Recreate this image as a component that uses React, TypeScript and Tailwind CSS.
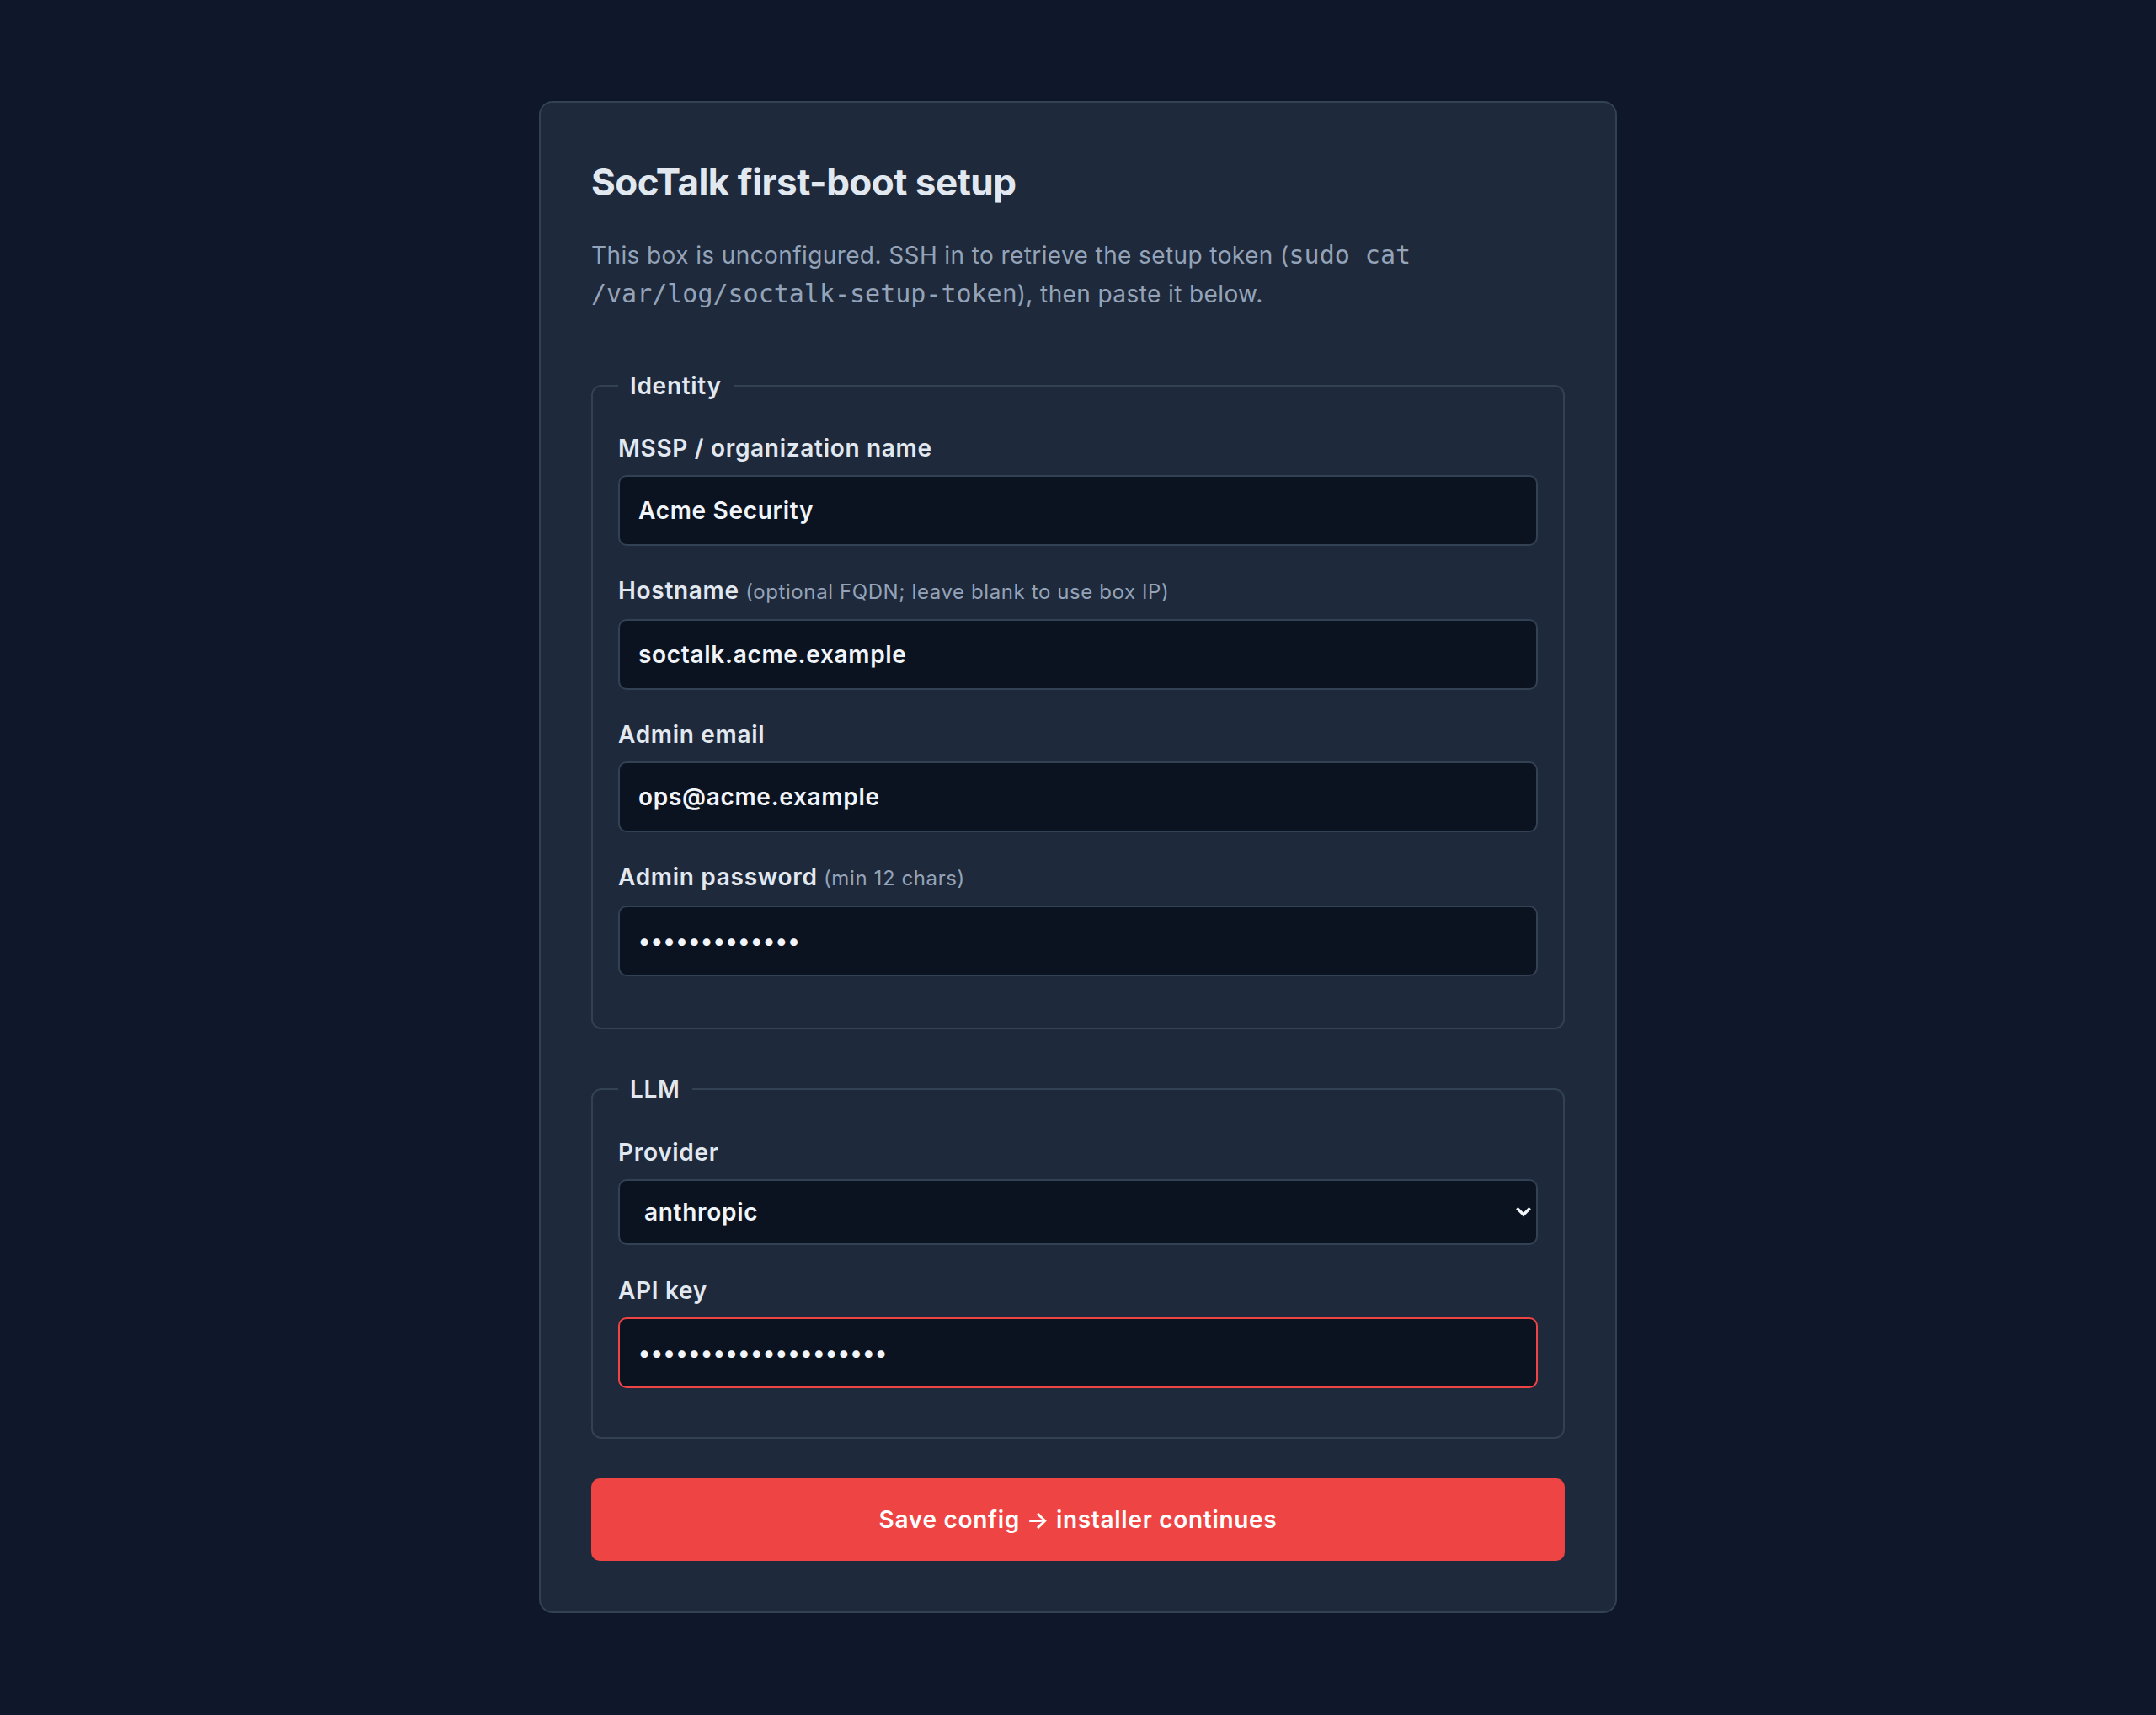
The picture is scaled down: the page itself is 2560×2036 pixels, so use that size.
import React from "react";

const inputCls =
  "block w-full h-[84px] rounded-[10px] border-2 border-[#334155] bg-[#0b1220] px-[22px] text-[28px] tracking-[0.7px] font-semibold text-[#f1f5f9] outline-none";

function Label({ children, hint }: { children: React.ReactNode; hint?: string }) {
  return (
    <label className="block text-[28px] leading-[40px] tracking-[0.7px] font-semibold text-[#e2e8f0] mb-[12px]">
      {children}
      {hint ? <span className="text-[24px] tracking-[0.6px] font-normal text-[#94a3b8]"> {hint}</span> : null}
    </label>
  );
}

function Chevron() {
  return (
    <svg width="20" height="14" viewBox="0 0 20 14" className="pointer-events-none absolute right-[7px] top-1/2 -translate-y-1/2">
      <polyline points="3.5,3.5 10,10 16.5,3.5" fill="none" stroke="#f1f5f9" strokeWidth="3.4" strokeLinecap="square" />
    </svg>
  );
}

export default function App() {
  return (
    <div className="min-h-screen bg-[#0f172a] pt-[120px] pb-[120px]" style={{ fontFamily: "Inter, 'Noto Sans', sans-serif" }}>
      <div className="mx-auto w-[1280px] rounded-[16px] border-2 border-[#334155] bg-[#1e293b] p-[60px]">
        <h1 className="mt-[6px] text-[44px] leading-[56px] font-bold tracking-[-0.5px] text-[#e2e8f0]">
          SocTalk first-boot setup
        </h1>
        <p className="mt-[36px] text-[28px] leading-[46px] tracking-[0.4px] text-[#94a3b8]">
          This box is unconfigured. SSH in to retrieve the setup token (
          <code className="text-[30px] tracking-normal" style={{ fontFamily: "'DejaVu Sans Mono', 'Liberation Mono', monospace" }}>
            sudo cat /var/log/soctalk-setup-token
          </code>
          ), then paste it below.
        </p>

        <fieldset className="mt-[66px] rounded-[12px] border-2 border-[#334155] px-[30px] pt-[34px] pb-[61px]">
          <legend className="px-[14px] text-[28px] leading-[40px] tracking-[0.7px] font-semibold text-[#e2e8f0]">Identity</legend>
          <div className="flex flex-col gap-[33px]">
            <div>
              <Label>MSSP / organization name</Label>
              <input className={inputCls} defaultValue="Acme Security" readOnly />
            </div>
            <div>
              <Label hint="(optional FQDN; leave blank to use box IP)">Hostname</Label>
              <input className={inputCls} defaultValue="soctalk.acme.example" readOnly />
            </div>
            <div>
              <Label>Admin email</Label>
              <input className={inputCls} defaultValue="ops@acme.example" readOnly />
            </div>
            <div>
              <Label hint="(min 12 chars)">Admin password</Label>
              <input type="password" className={inputCls} defaultValue="correcthorse1" readOnly />
            </div>
          </div>
        </fieldset>

        <fieldset className="mt-[51px] rounded-[12px] border-2 border-[#334155] px-[30px] pt-[35px] pb-[58px]">
          <legend className="px-[14px] text-[28px] leading-[40px] tracking-[0.7px] font-semibold text-[#e2e8f0]">LLM</legend>
          <div className="flex flex-col gap-[34px]">
            <div>
              <Label>Provider</Label>
              <div className="relative">
                <select
                  className="block w-full h-[78px] appearance-none rounded-[10px] border-2 border-[#334155] bg-[#0b1220] pl-[29px] pr-[40px] text-[28px] tracking-[0.7px] font-semibold text-[#f1f5f9] outline-none"
                  defaultValue="anthropic"
                >
                  <option value="anthropic">anthropic</option>
                  <option value="openai">openai</option>
                </select>
                <Chevron />
              </div>
            </div>
            <div>
              <Label>API key</Label>
              <input
                type="password"
                className="block w-full h-[84px] rounded-[10px] border-2 border-[#ef4444] bg-[#0b1220] px-[22px] text-[28px] tracking-[0.7px] font-semibold text-[#f1f5f9] outline-none"
                defaultValue="sk-ant-0123456789abc"
                readOnly
              />
            </div>
          </div>
        </fieldset>

        <button className="mt-[47px] block w-full h-[98px] rounded-[10px] bg-[#ef4444] text-[28px] tracking-[0.7px] font-semibold text-white">
          Save config → installer continues
        </button>
      </div>
    </div>
  );
}
